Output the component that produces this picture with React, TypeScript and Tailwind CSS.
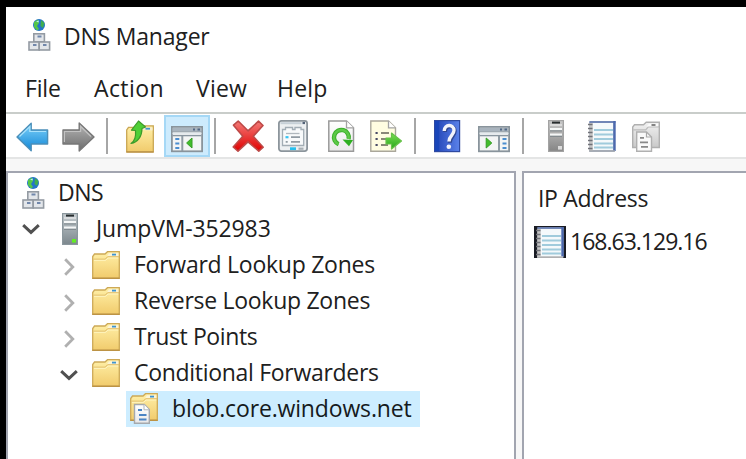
import React from "react";

type SvgProps = { w: number; h?: number; className?: string; children: React.ReactNode };

function Glyph({ w, h = 34, className = "", children }: SvgProps) {
  return (
    <svg width={w} height={h} viewBox={`0 0 ${w} ${h}`} className={`shrink-0 ${className}`} fill="none">
      {children}
    </svg>
  );
}

function Gradients() {
  const defs: [string, string, string, boolean][] = [
    ["gBlue", "#7fd3fb", "#1186d6", false],
    ["gGray", "#b5b5b5", "#6c6c6c", false],
    ["gFolder", "#fff0a8", "#f1cb6c", false],
    ["gRed", "#f47b78", "#e00000", false],
    ["gGreen", "#7be052", "#27a51a", false],
    ["gHelp", "#2143b4", "#5b82ea", true],
    ["gServer", "#c6cdd1", "#7c878d", false],
    ["gServerGray", "#c9c9c9", "#858585", false],
    ["gPaper", "#ffffff", "#e9e9e9", false],
    ["gGrayFolder", "#f1f1f1", "#c9c9c9", false],
  ];
  return (
    <svg width="0" height="0" className="absolute">
      <defs>
        {defs.map(([id, a, b, horizontal]) => (
          <linearGradient key={id} id={id} x1="0" y1="0" x2={horizontal ? "1" : "0"} y2={horizontal ? "0" : "1"}>
            <stop offset="0" stopColor={a} />
            <stop offset="1" stopColor={b} />
          </linearGradient>
        ))}
      </defs>
    </svg>
  );
}

function DnsIcon({ className }: { className?: string }) {
  return (
    <Glyph w={24} h={34} className={className}>
      <circle cx="11" cy="7" r="6" fill="#2474c8" />
      <path d="M6 4 L10 1.5 L11 5 L9 8 L11 11 L9 12.5 L6 9Z" fill="#54c648" />
      <path d="M13 2 L16.5 5 L15 10 L12.5 8Z" fill="#3fae4e" />
      <path d="M8 3.5 L11 2.5 L10.5 4.5Z" fill="#b9f0f5" />
      <g fill="#e3e6ea" stroke="#949ba3" strokeWidth="1.6">
        <rect x="5.8" y="15.8" width="10.6" height="8" />
        <rect x="1" y="24" width="10.2" height="8" />
        <rect x="11.2" y="24" width="10.4" height="8" />
      </g>
      <path d="M9.5 18.5h4M5 27h3.5M15 27h3.5" stroke="#7187ab" strokeWidth="1.8" />
    </Glyph>
  );
}

function ServerIcon({ gray = false, className }: { gray?: boolean; className?: string }) {
  return (
    <Glyph w={18} h={34} className={className}>
      <rect x="1.6" y="1.6" width="14.8" height="30.8" fill={gray ? "url(#gServerGray)" : "url(#gServer)"} stroke={gray ? "#a3a3a3" : "#8b979d"} strokeWidth="1.2" />
      <path d="M5 3.6h8" stroke="#262b2d" strokeWidth="2" />
      <path d="M3 6h12" stroke="#ededed" strokeWidth="1.2" />
      <path d="M3 10.2h12M3 15.7h12" stroke="#f5f7f7" strokeWidth="2.2" />
      <path d="M3 11.9h12M3 17.3h12" stroke="#7b8489" strokeWidth="1" />
      <rect x="11" y="27" width="4" height="3.6" fill={gray ? "#dcdcdc" : "#63ee22"} />
    </Glyph>
  );
}

function FolderShape() {
  return (
    <>
      <path d="M1.7 27.3V5.5L3.5 3H14l2.5-2.3h11.8v26.6Z" fill="url(#gFolder)" stroke="#cda957" strokeWidth="1.3" />
      <path d="M16 5.2 L18 2.2h9.4v3Z" fill="#fbf4d8" />
      <path d="M2.5 8.2h11.7l2.3-2.4h11.5" stroke="#dfba66" strokeWidth="1" />
      <path d="M3 9.3h11.8l2.2-2.3h10.3" stroke="#fff5c1" strokeWidth="1" />
      <path d="M21 3.6h4" stroke="#3f94cf" strokeWidth="1.8" />
      <path d="M1.4 27.2h27.2" stroke="#b98f43" strokeWidth="1.3" />
    </>
  );
}

function FolderIcon({ className }: { className?: string }) {
  return (
    <Glyph w={30} h={28} className={className}>
      <FolderShape />
    </Glyph>
  );
}

function ZoneIcon({ className }: { className?: string }) {
  return (
    <Glyph w={30} h={32} className={className}>
      <FolderShape />
      <path d="M5.5 11.5h9.8l5 5v13.8H5.5Z" fill="url(#gPaper)" stroke="#a5a9ad" strokeWidth="1.4" />
      <path d="M15 11.5v5.3h5.2" fill="#fff" stroke="#b1b5b8" strokeWidth="1" />
      <path d="M9 17h4M10 22h7.5M10 26.5h7.5" stroke="#4b84c4" strokeWidth="1.9" />
    </Glyph>
  );
}

function NotebookIcon({ selected = false, className }: { selected?: boolean; className?: string }) {
  return (
    <Glyph w={34} h={34} className={className}>
      {selected && <rect x="1" y="1" width="32" height="32" fill="#191b23" />}
      <rect x="5" y="3" width={selected ? 25 : 24} height="29" fill="#f5f9fb" stroke={selected ? "#a2a9b4" : "#7b8db0"} strokeWidth="1.2" />
      <path d="M4.5 3h26" stroke="#6a80b5" strokeWidth="1.8" />
      <path d="M29.5 2v30" stroke="#4c69ae" strokeWidth="2.4" />
      <path d="M9 11h19M9 15.5h19M9 20h19M9 24.5h19M9 28.5h19" stroke="#a0cbdc" strokeWidth="1.9" />
      <path d="M6 4v28" stroke="#c5c5c5" strokeWidth="3.5" />
      <path d="M3 5.5h4.5M3 9.5h4.5M3 13.5h4.5M3 17.5h4.5M3 21.5h4.5M3 25.5h4.5M3 29.5h4.5" stroke="#707278" strokeWidth="1.6" />
      <path d="M4 32h26" stroke={selected ? "#c6c6c6" : "#a4a8ae"} strokeWidth="1.5" />
    </Glyph>
  );
}

function Back() {
  return (
    <Glyph w={34}>
      <path d="M1 18 L15.2 4.3V11H31.6V25H15.2V31.8Z" fill="url(#gBlue)" stroke="#4b8fb9" strokeWidth="1.4" strokeLinejoin="round" />
      <path d="M3.5 17.5 L13.8 7.6V12.5H30" stroke="#a9e2fc" strokeWidth="1.2" />
    </Glyph>
  );
}

function Forward() {
  return (
    <Glyph w={34}>
      <path d="M32 18 L17.2 4V11H1V25H17.2V32Z" fill="url(#gGray)" stroke="#777" strokeWidth="1.4" strokeLinejoin="round" />
      <path d="M2.4 23V12.5H18.6V7.5L29 17.5" stroke="#c2c2c2" strokeWidth="1.2" />
    </Glyph>
  );
}

function UpFolder() {
  return (
    <Glyph w={30}>
      <g transform="translate(0 6)">
        <path d="M1.7 26.8V5L3.5 2.3H14l2.5-1.5h11.8v26Z" fill="url(#gFolder)" stroke="#c9a653" strokeWidth="1.3" />
        <path d="M15.5 5 L18 2.4h9.5v3Z" fill="#f7edcd" />
        <path d="M20.5 3.7h4.5" stroke="#3f94cf" strokeWidth="1.8" />
        <path d="M1.4 27h27.2" stroke="#b98f43" strokeWidth="1.3" />
      </g>
      <path d="M6 24.5 C10 22 11 17 10.5 11.5 L6.5 11.2 L13.5 2 L20.5 8 L17 9.5 C17 17 13 23.5 6 24.5Z" fill="#4fcf36" stroke="#3d9b2b" strokeWidth="1.2" strokeLinejoin="round" />
    </Glyph>
  );
}

function WindowPane({ right = false }: { right?: boolean }) {
  return (
    <Glyph w={34}>
      <rect x="1.9" y="7.9" width="30.2" height="24.4" fill="#f4f5f5" stroke="#89949c" strokeWidth="1.8" />
      <rect x="2.8" y="8.8" width="28.4" height="3.2" fill="#a9b4be" />
      <path d="M2.5 12.8h29" stroke="#8a96a0" strokeWidth="1.2" />
      <path d="M2.5 14.4h29" stroke="#e5eaee" strokeWidth="1.6" />
      <path d="M2.5 16.6h29" stroke="#8a96a0" strokeWidth="1.4" />
      <path d="M23 10.5h2M27.5 10.5h2.5" stroke="#536885" strokeWidth="1.8" />
      {right ? (
        <>
          <path d="M22 17v15" stroke="#8f9ba4" strokeWidth="2" />
          <path d="M25.5 20h4M25.5 24.5h4M25.5 29h4" stroke="#4b8ed0" strokeWidth="2" />
          <path d="M9.2 19 L14.8 24 L9.2 29Z" fill="#42bd2b" stroke="#369c26" />
        </>
      ) : (
        <>
          <path d="M12.3 17v15" stroke="#8f9ba4" strokeWidth="2" />
          <path d="M5.3 20h4M5.3 24.5h4M5.3 29h4" stroke="#4b8ed0" strokeWidth="2" />
          <path d="M22 19 L16.6 24 L22 29Z" fill="#42bd2b" stroke="#369c26" />
        </>
      )}
    </Glyph>
  );
}

function Delete() {
  return (
    <Glyph w={34}>
      <path d="M2.5 6.2 L7.2 2 L17 11.8 L27.5 2.2 L32 6.5 L22.3 17.3 L32.2 28.2 L27.8 32.2 L17 22.8 L7 32.2 L2.2 28 L11.8 17.2Z" fill="url(#gRed)" stroke="#bd4a48" strokeWidth="1.6" strokeLinejoin="round" />
    </Glyph>
  );
}

function Properties() {
  return (
    <Glyph w={32}>
      <rect x="1.9" y="1.9" width="28.2" height="30.2" rx="2.5" fill="#edf0f2" stroke="#8c959c" strokeWidth="1.8" />
      <path d="M3.5 4.2h21" stroke="#c6d0d7" strokeWidth="2" />
      <path d="M25.5 4h2.5" stroke="#526278" strokeWidth="2.2" />
      <path d="M5.5 10.5h3V8.5h7v2h2.5v-2h6v2h2.7v16H5.5Z" fill="#f8fafb" stroke="#a2adb5" strokeWidth="1.3" />
      <path d="M9 14.5h13.5" stroke="#b0b8be" strokeWidth="1.3" />
      <path d="M8.5 18.2h3" stroke="#36c4f3" strokeWidth="2.2" />
      <path d="M14 18.2h9M14 22.8h9M8.7 22.8h2" stroke="#909ba3" strokeWidth="1.8" />
      <path d="M13 29.7h6" stroke="#28bfee" strokeWidth="2.8" />
      <path d="M21.5 29.7h5" stroke="#a8afb4" strokeWidth="2.2" />
    </Glyph>
  );
}

function Refresh() {
  return (
    <Glyph w={28}>
      <path d="M1.8 2H19.5L26.5 8.7V32.2H1.8Z" fill="url(#gPaper)" stroke="#9a9a9a" strokeWidth="1.5" />
      <path d="M19.5 2V8.8H26.5" fill="#fff" stroke="#a3a3a3" strokeWidth="1.3" />
      <path d="M11.6 25.2 A7.4 7.4 0 1 1 21.6 20" stroke="#3caf2b" strokeWidth="4.4" />
      <path d="M11.6 25.2 A7.4 7.4 0 1 1 21.6 20" stroke="#5cc947" strokeWidth="2.4" />
      <path d="M15.5 20.5 L26 21 L22 27.2Z" fill="#2daf20" />
    </Glyph>
  );
}

function Export() {
  return (
    <Glyph w={34}>
      <path d="M1.8 2H19.5L26.5 8.7V32.2H1.8Z" fill="#fffde1" stroke="#aaa79b" strokeWidth="1.4" />
      <path d="M19.5 2V8.8H26.5" fill="#fff" stroke="#a3a3a3" strokeWidth="1.3" />
      <path d="M6.5 14h2.2M6.5 20h2.2M6.5 26h2.2" stroke="#4a4c67" strokeWidth="2" />
      <path d="M12 14h8M12 20h6M12 26h7" stroke="#8a8878" strokeWidth="1.8" />
      <path d="M17 19H22.5V14L32.5 22L22.5 30V25H17Z" fill="url(#gGreen)" stroke="#66c248" strokeWidth="1.2" strokeLinejoin="round" />
    </Glyph>
  );
}

function HelpIcon() {
  return (
    <Glyph w={28}>
      <rect x="1.6" y="1.6" width="25" height="31" fill="url(#gHelp)" stroke="#2e49a1" strokeWidth="1.2" />
      <rect x="2" y="2" width="4.2" height="30" fill="#1945b9" />
      <path d="M11.2 12.2 C11.3 5 21 4.8 21 11.3 C21 16.4 16 16.5 16 23" stroke="#304792" strokeWidth="4" transform="translate(.8 .8)" />
      <path d="M11.2 12 C11.3 4.8 21 4.8 21 11.3 C21 16.3 16 16.5 16 22.5" stroke="#f3f4fb" strokeWidth="3.4" />
      <circle cx="15.8" cy="27.8" r="2.3" fill="#f3f4fb" />
    </Glyph>
  );
}

function PagesIcon() {
  return (
    <Glyph w={30}>
      <path d="M1.7 28.5V8L3.5 5.7H12.5L15.2 3.2H28.3V28.5Z" fill="url(#gGrayFolder)" stroke="#b0b0b0" strokeWidth="1.4" />
      <path d="M2.2 10.8h12.5l2.6-3h10.8" stroke="#bcbcbc" strokeWidth="1.2" />
      <path d="M15.5 7.5 L18 4.7h9v2.5Z" fill="#fafafa" />
      <path d="M20.5 6h4" stroke="#777" strokeWidth="1.8" />
      <path d="M5.7 13H15.5L20.5 18V32.2H5.7Z" fill="#fafafa" stroke="#b0b0b0" strokeWidth="1.4" />
      <path d="M15.5 13V18H20.5" stroke="#aaa" strokeWidth="1.2" />
      <path d="M9 18.8h4M9 23.4h8M10 27.8h7" stroke="#888" strokeWidth="1.8" />
    </Glyph>
  );
}

function Chevron({ open = false, className }: { open?: boolean; className?: string }) {
  return (
    <Glyph w={20} h={20} className={className}>
      {open ? (
        <path d="M2.2 6.2 L10 13.4 L17.8 6.2" stroke="#505050" strokeWidth="3" />
      ) : (
        <path d="M6.2 2.2 L13.8 10 L6.2 17.8" stroke="#b0b0b0" strokeWidth="2.8" />
      )}
    </Glyph>
  );
}

function Separator({ className }: { className: string }) {
  return <div className={`h-9 w-0.5 shrink-0 bg-[#a6a6a6] ${className}`} />;
}

const folders = [
  { label: "Forward Lookup Zones", open: false, track: "tracking-[-0.26px]" },
  { label: "Reverse Lookup Zones", open: false, track: "tracking-[-0.28px]" },
  { label: "Trust Points", open: false, track: "tracking-[-0.4px]" },
  { label: "Conditional Forwarders", open: true, track: "tracking-[-0.3px]" },
];

export default function App() {
  return (
    <div className="h-[459px] w-[746px] overflow-hidden bg-black pl-1.5 pt-[7px] font-['Open_Sans',sans-serif] text-[23px] leading-9 whitespace-nowrap text-[#202020]">
      <Gradients />
      <div className="flex h-[452px] flex-col bg-white">
        <header className="flex h-[61px] shrink-0 items-start pl-[22px] pt-[11px]">
          <DnsIcon />
          <h1 className="ml-[12px] tracking-[-0.2px]">DNS Manager</h1>
        </header>

        <nav className="flex h-[44px] shrink-0 items-start pl-[19px] pt-[2px]">
          <span className="w-[69px] tracking-[-0.2px]">File</span>
          <span className="w-[102px] tracking-[0.4px]">Action</span>
          <span className="w-[81px] tracking-[0.2px]">View</span>
          <span className="tracking-[0.2px]">Help</span>
        </nav>

        <div className="flex h-[47px] shrink-0 items-center border-y-2 border-t-[#c9cdca] border-b-[#e4e5e5] pl-[10px] pt-px">
          <Back />
          <div className="w-[12px]" />
          <Forward />
          <Separator className="ml-[10px]" />
          <div className="w-[17px]" />
          <UpFolder />
          <div className="ml-[9px] flex h-[42px] w-[46px] shrink-0 items-center justify-center border-2 border-[#a5d8f6] bg-[#cdebfd]">
            <WindowPane />
          </div>
          <Separator className="ml-[4px] mr-[15px]" />
          <Delete />
          <div className="w-[12px]" />
          <Properties />
          <div className="w-[18px]" />
          <Refresh />
          <div className="w-[14px]" />
          <Export />
          <Separator className="ml-[11px] mr-[17px]" />
          <HelpIcon />
          <div className="w-[16px]" />
          <WindowPane right />
          <Separator className="ml-[11px] mr-[23px]" />
          <ServerIcon gray />
          <div className="w-[20px]" />
          <NotebookIcon />
          <div className="w-[12px]" />
          <PagesIcon />
        </div>

        <main className="flex min-h-0 flex-1 bg-[#f7f7f7] pt-[12px]">
          <section className="w-[510px] shrink-0 border-2 border-b-0 border-[#a2a5b0] bg-white pt-[2px]">
            <div className="flex h-9 items-center pl-[14px]">
              <DnsIcon />
              <span className="ml-[12px] pb-[3px] tracking-[-0.5px]">DNS</span>
            </div>
            <div className="flex h-9 items-center pl-[13px]">
              <Chevron open />
              <ServerIcon className="ml-[20px]" />
              <span className="ml-[17px] pb-[3px] tracking-[-0.13px]">JumpVM-352983</span>
            </div>
            {folders.map((f) => (
              <div key={f.label} className="flex h-9 items-center pl-[51px]">
                <Chevron open={f.open} className="mt-[4px]" />
                <FolderIcon className="ml-[12px]" />
                <span className={`ml-[13px] pb-[3px] ${f.track}`}>{f.label}</span>
              </div>
            ))}
            <div className="ml-[118px] flex h-9 w-[294px] items-center bg-[#cdedff] pl-[3px] text-[#151a20]">
              <ZoneIcon />
              <span className="ml-[13px] pb-[3px] tracking-[-0.15px]">blob.core.windows.net</span>
            </div>
          </section>

          <section className="ml-[6px] min-w-0 flex-1 border-2 border-r-0 border-b-0 border-[#a2a5b0] bg-white">
            <div className="mt-[7px] flex h-9 items-center pl-[14px] tracking-[-0.3px]">IP Address</div>
            <div className="mt-[8px] flex h-9 items-center pl-[9px]">
              <NotebookIcon selected />
              <span className="ml-[3px] pb-[2px] tracking-[-1px]">168.63.129.16</span>
            </div>
          </section>
        </main>
      </div>
    </div>
  );
}
